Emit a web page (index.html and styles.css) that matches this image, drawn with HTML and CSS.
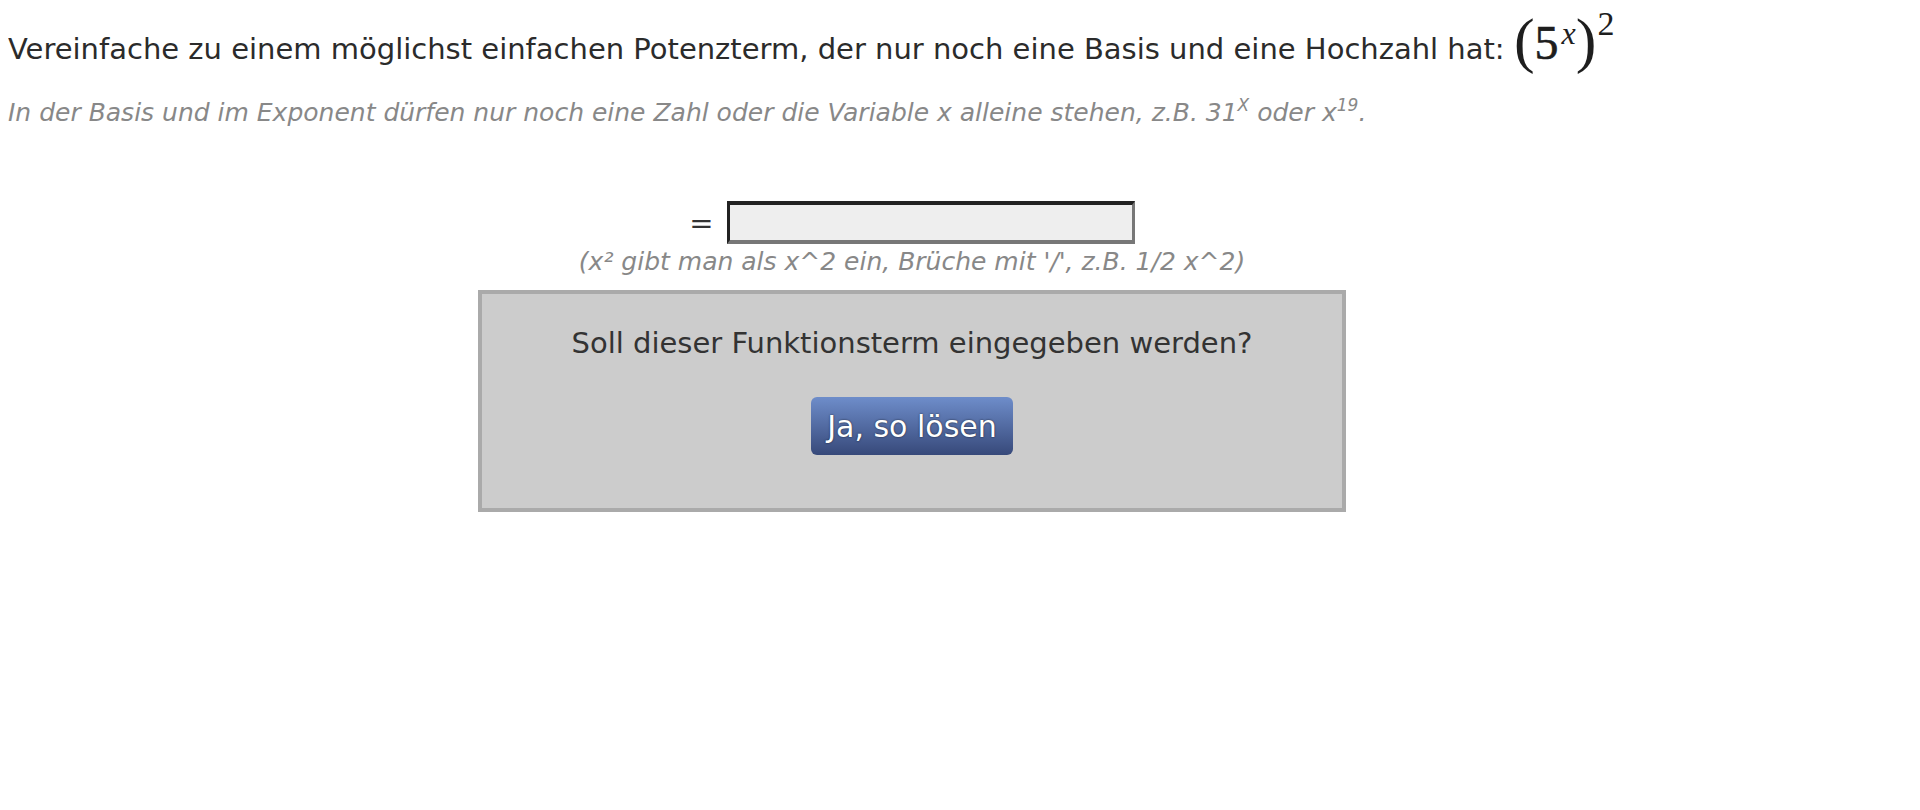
FILE: index.html
```html
<!DOCTYPE html>
<html lang="de">
<head>
<meta charset="utf-8">
<title>Potenzterm vereinfachen</title>
<link rel="stylesheet" href="styles.css">
</head>
<body>
<div class="page">
  <p class="task">Vereinfache zu einem möglichst einfachen Potenzterm, der nur noch eine Basis und eine Hochzahl hat: <span class="math"><span class="paren">(</span><span class="num">5</span><sup class="mvar">x</sup><span class="paren">)</span><sup class="mexp">2</sup></span></p>
  <p class="note">In der Basis und im Exponent dürfen nur noch eine Zahl oder die Variable x alleine stehen, z.B. 31<sup>X</sup> oder x<sup>19</sup>.</p>
  <div class="answer">
    <div class="row">
      <span class="eq">=</span>
      <input class="field" type="text" aria-label="Antwort">
    </div>
    <p class="hint">(x² gibt man als x^2 ein, Brüche mit '/', z.B. 1/2 x^2)</p>
    <div class="confirm">
      <p class="question">Soll dieser Funktionsterm eingegeben werden?</p>
      <button class="btn" type="button">Ja, so lösen</button>
    </div>
  </div>
</div>
</body>
</html>
```

FILE: styles.css
```css
html, body {
  background: #fff;
}
body {
  margin: 8px;
  font-family: "DejaVu Sans", Verdana, sans-serif;
  color: #2b2b2b;
}
.page {
  width: 1808px;
  display: flex;
  flex-direction: column;
}
.task {
  margin: 0;
  padding-top: 11px;
  font-size: 29px;
  line-height: 60px;
  height: 60px;
}
.math {
  font-family: "Liberation Serif", "DejaVu Serif", serif;
  color: #1e1e1e;
  white-space: nowrap;
  line-height: 0;
}
.paren {
  font-size: 62px;
  line-height: 0;
  vertical-align: -2px;
}
.num {
  font-size: 48px;
  line-height: 0;
  -webkit-text-stroke: 0.6px #1e1e1e;
}
.mvar {
  font-style: italic;
  font-size: 32px;
  line-height: 0;
  vertical-align: 15px;
  margin-left: 3px;
}
.mexp {
  font-size: 34px;
  line-height: 0;
  vertical-align: 24px;
  margin-left: 1px;
}
.note {
  margin: 19px 0 0;
  font-size: 25px;
  font-style: italic;
  color: #888;
  line-height: 30px;
}
.note sup {
  font-size: 17px;
  line-height: 0;
  vertical-align: 10px;
}
.answer {
  display: flex;
  flex-direction: column;
  align-items: center;
  margin-top: 73px;
}
.row {
  display: flex;
  align-items: center;
  gap: 13px;
}
.eq {
  font-size: 29px;
  color: #333;
}
.field {
  width: 408px;
  height: 43px;
  box-sizing: border-box;
  margin: 0;
  background: #eee;
  border-style: solid;
  border-width: 4px 3px 4px 3px;
  border-color: #222 #777 #777 #222;
}
.hint {
  margin: 3px 0 0;
  font-size: 25px;
  font-style: italic;
  color: #888;
  line-height: 30px;
}
.confirm {
  margin-top: 13px;
  width: 868px;
  height: 222px;
  box-sizing: border-box;
  border: 4px solid #aaa;
  background: #ccc;
  display: flex;
  flex-direction: column;
  align-items: center;
}
.question {
  margin: 33px 0 0;
  font-size: 29px;
  line-height: 32px;
  color: #333;
}
.btn {
  margin-top: 38px;
  width: 202px;
  height: 58px;
  border: 0;
  border-radius: 6px;
  background: linear-gradient(#6e8dca, #37497a);
  color: #fff;
  font-family: "DejaVu Sans", Verdana, sans-serif;
  font-size: 30px;
  text-shadow: 0 0 2px rgba(0, 0, 0, 0.7);
  padding: 0;
  cursor: pointer;
}
```
